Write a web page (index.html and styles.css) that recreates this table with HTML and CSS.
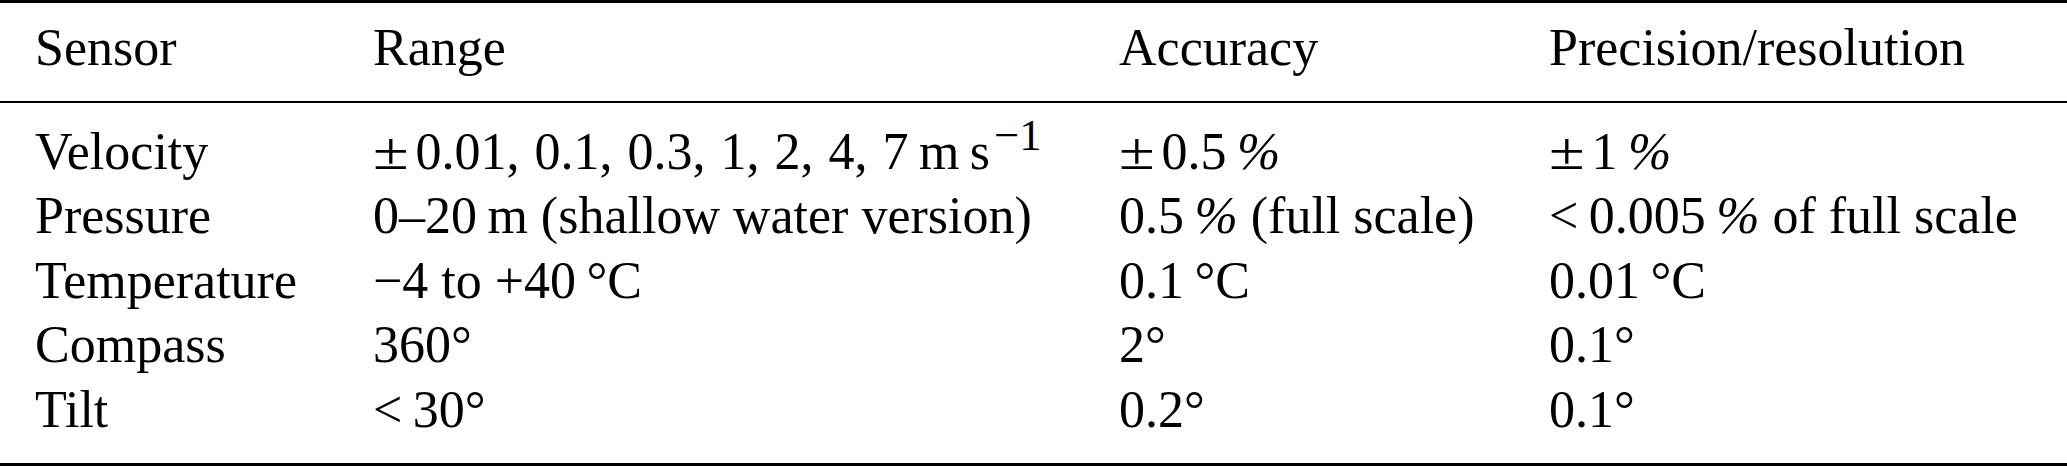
FILE: index.html
```html
<!DOCTYPE html>
<html lang="en">
  <head>
    <meta charset="UTF-8" />
    <meta name="viewport" content="width=device-width, initial-scale=1.0" />
    <title>Sensor specifications</title>
    <link rel="stylesheet" href="styles.css">
  </head>
  <body>
    <table class="spec-table">
      <colgroup>
        <col class="col-sensor" />
        <col class="col-range" />
        <col class="col-accuracy" />
        <col class="col-precision" />
      </colgroup>
      <thead>
        <tr>
          <th>Sensor</th>
          <th>Range</th>
          <th>Accuracy</th>
          <th>Precision/resolution</th>
        </tr>
      </thead>
      <tbody>
        <tr class="first">
          <td>Velocity</td>
          <td class="velocity"><span class="pm">±</span>0.01, 0.1, 0.3, 1, 2, 4, 7&#8201;m&#8201;s<sup>−1</sup></td>
          <td><span class="pm">±</span>0.5&#8201;<span class="pct">%</span></td>
          <td><span class="pm">±</span>1&#8201;<span class="pct">%</span></td>
        </tr>
        <tr>
          <td>Pressure</td>
          <td>0–20&#8201;m (shallow water version)</td>
          <td>0.5&#8201;<span class="pct">%</span> (full scale)</td>
          <td>&lt;&#8201;0.005&#8201;<span class="pct">%</span> of full scale</td>
        </tr>
        <tr>
          <td>Temperature</td>
          <td>−4 to +40&#8201;°C</td>
          <td>0.1&#8201;°C</td>
          <td>0.01&#8201;°C</td>
        </tr>
        <tr>
          <td>Compass</td>
          <td>360°</td>
          <td>2°</td>
          <td>0.1°</td>
        </tr>
        <tr class="last">
          <td>Tilt</td>
          <td>&lt;&#8201;30°</td>
          <td>0.2°</td>
          <td>0.1°</td>
        </tr>
      </tbody>
    </table>
  </body>
</html>
```

FILE: styles.css
```css
body {
  margin: 0;
  background: #ffffff;
  color: #000000;
  font-family: "Liberation Serif", "Times New Roman", serif;
}

.spec-table {
  width: 100%;
  border-collapse: collapse;
  table-layout: fixed;
  font-size: 52px;
  line-height: 64.5px;
  border-top: 3px solid #000;
  border-bottom: 3px solid #000;
}

.col-sensor {
  width: 373px;
}

.col-range {
  width: 746px;
}

.col-accuracy {
  width: 430px;
}

.spec-table th,
.spec-table td {
  padding: 0;
  text-align: left;
  font-weight: normal;
  white-space: nowrap;
  vertical-align: baseline;
}

.spec-table th:first-child,
.spec-table td:first-child {
  padding-left: 35px;
}

.spec-table thead th {
  padding-top: 13px;
  padding-bottom: 20px;
  border-bottom: 2px solid #000;
}

.spec-table tr.first td {
  padding-top: 17px;
}

.spec-table tr.last td {
  padding-bottom: 21px;
}

.velocity {
  word-spacing: 2px;
}

.pm {
  display: inline-block;
  transform: scaleX(1.25);
  transform-origin: left center;
  margin-right: 14px;
}

.pct {
  font-style: italic;
}

sup {
  font-size: 0.86em;
  line-height: 0;
  vertical-align: 0.42em;
  margin-left: 4px;
}
```
